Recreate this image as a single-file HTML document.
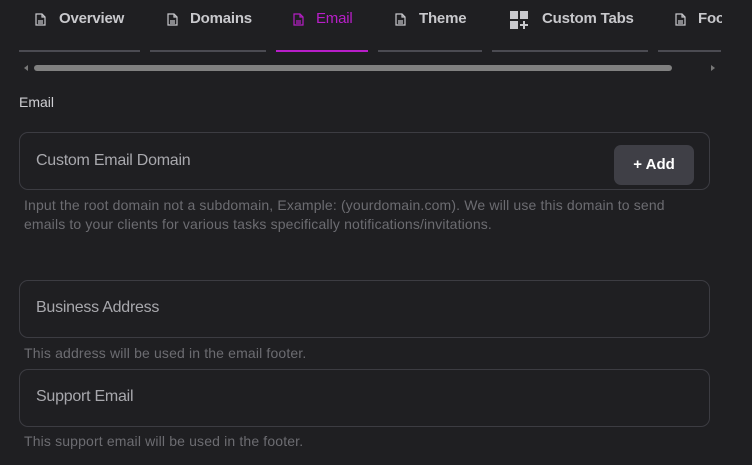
<!DOCTYPE html>
<html><head><style>
body{margin:0;width:752px;height:465px;background:#1f1f22;font-family:"Liberation Sans",sans-serif;overflow:hidden;position:relative}
.t{position:absolute;top:10px;font-size:15px;font-weight:bold;color:#c8c8cc;white-space:nowrap;letter-spacing:-0.2px}
.u{position:absolute;top:50px;height:2px;background:#4b4b52}
.ic{position:absolute;top:13px}
.box{position:absolute;left:19px;width:689px;border:1.5px solid #3c3c42;border-radius:9px}
.ph{position:absolute;left:36px;font-size:16px;color:#a8a8ad;letter-spacing:-0.25px}
.h{position:absolute;left:24px;font-size:14px;color:#6c6c71;line-height:19px;letter-spacing:0.15px}
</style></head><body>
<svg class="ic" style="left:35px" width="11" height="13" viewBox="0 0 11 13" fill="none" stroke="#c8c8cc" stroke-width="1.2"><path d="M1 1h6l3 3v8H1z M7 1v3h3 M3 8h5 M3 10h5"/></svg>
<div class="t" style="left:59px">Overview</div>
<svg class="ic" style="left:167px" width="11" height="13" viewBox="0 0 11 13" fill="none" stroke="#c8c8cc" stroke-width="1.2"><path d="M1 1h6l3 3v8H1z M7 1v3h3 M3 8h5 M3 10h5"/></svg>
<div class="t" style="left:190px">Domains</div>
<svg class="ic" style="left:293px" width="11" height="13" viewBox="0 0 11 13" fill="none" stroke="#b51ec4" stroke-width="1.2"><path d="M1 1h6l3 3v8H1z M7 1v3h3 M3 8h5 M3 10h5"/></svg>
<div class="t" style="left:316px;color:#b81ec8;font-weight:normal">Email</div>
<svg class="ic" style="left:395px" width="11" height="13" viewBox="0 0 11 13" fill="none" stroke="#c8c8cc" stroke-width="1.2"><path d="M1 1h6l3 3v8H1z M7 1v3h3 M3 8h5 M3 10h5"/></svg>
<div class="t" style="left:419px">Theme</div>
<svg style="position:absolute;left:510px;top:11px" width="19" height="19" viewBox="0 0 19 19" fill="#c8c8cc"><rect x="0" y="0" width="8" height="8"/><rect x="10" y="0" width="8" height="8"/><rect x="0" y="10" width="8" height="8"/><path d="M13 10h2v3h3v2h-3v3h-2v-3h-3v-2h3z"/></svg>
<div class="t" style="left:542px">Custom Tabs</div>
<svg class="ic" style="left:675px" width="11" height="13" viewBox="0 0 11 13" fill="none" stroke="#c8c8cc" stroke-width="1.2"><path d="M1 1h6l3 3v8H1z M7 1v3h3 M3 8h5 M3 10h5"/></svg>
<div class="t" style="left:698px;width:24px;overflow:hidden">Footer</div>
<div class="u" style="left:19px;width:121px"></div>
<div class="u" style="left:150px;width:116px"></div>
<div class="u" style="left:276px;width:92px;background:#b81ec8"></div>
<div class="u" style="left:378px;width:104px"></div>
<div class="u" style="left:492px;width:156px"></div>
<div class="u" style="left:658px;width:63px"></div>
<div style="position:absolute;left:24px;top:65px;width:0;height:0;border-top:3px solid transparent;border-bottom:3px solid transparent;border-right:4px solid #777"></div>
<div style="position:absolute;left:711px;top:65px;width:0;height:0;border-top:3px solid transparent;border-bottom:3px solid transparent;border-left:4px solid #777"></div>
<div style="position:absolute;left:34px;top:65px;width:638px;height:6px;border-radius:3px;background:#808080"></div>
<div style="position:absolute;left:19px;top:94px;font-size:14px;color:#cfcfd3">Email</div>
<div class="box" style="top:132px;height:56px"></div>
<div class="ph" style="top:152px">Custom Email Domain</div>
<div style="position:absolute;left:614px;top:145px;width:80px;height:40px;background:#3f3f46;border-radius:7px;color:#fff;font-weight:bold;font-size:15px;line-height:40px;text-align:center">+ Add</div>
<div class="h" style="top:196px">Input the root domain not a subdomain, Example: (yourdomain.com). We will use this domain to send<br>emails to your clients for various tasks specifically notifications/invitations.</div>
<div class="box" style="top:280px;height:56px"></div>
<div class="ph" style="top:299px">Business Address</div>
<div class="h" style="top:344px">This address will be used in the email footer.</div>
<div class="box" style="top:369px;height:56px"></div>
<div class="ph" style="top:388px">Support Email</div>
<div class="h" style="top:432px">This support email will be used in the footer.</div>
</body></html>
